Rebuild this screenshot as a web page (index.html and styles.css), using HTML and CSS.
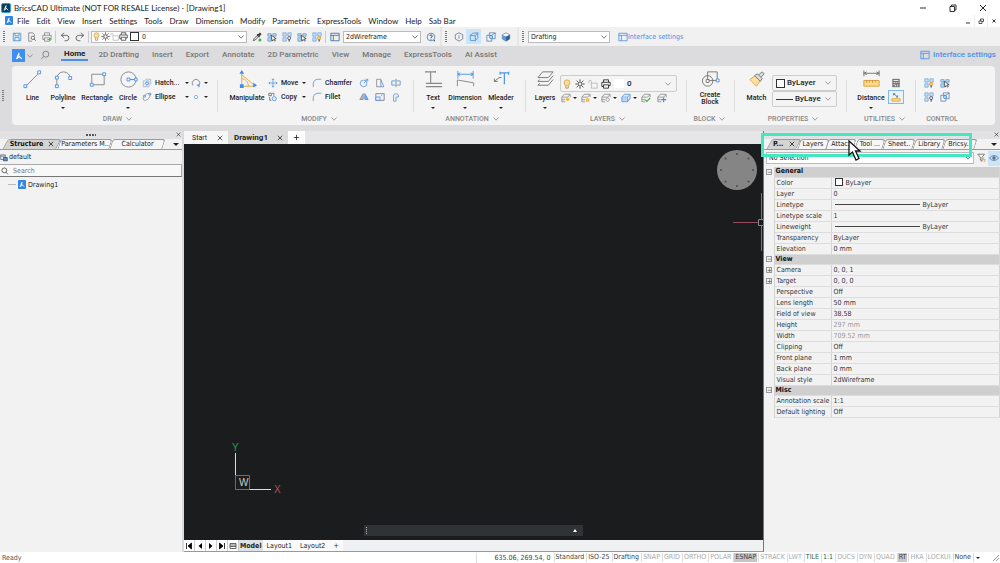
FILE: index.html
```
<!DOCTYPE html>
<html lang="en">
<head>
<meta charset="utf-8">
<title>BricsCAD Ultimate</title>
<link rel="stylesheet" href="styles.css">
</head>
<body>
<svg class="defs" aria-hidden="true">
  <symbol id="logo" viewBox="0 0 12 12"><path d="M6 2.500 3 9.500M5 5l4.200 4.300M6 2.500l-.8 4.300M3.600 9l3-2" fill="none" stroke="#fff" stroke-width="1.300"/></symbol>
  <symbol id="chev" viewBox="0 0 8 8"><path d="M1.500 2.500 4 5.200l2.500-2.700" fill="none" stroke="currentColor" stroke-width=".8"/></symbol>
  <symbol id="x" viewBox="0 0 8 8"><path d="m1 1 6 6M7 1 1 7" fill="none" stroke="currentColor"/></symbol>
  <symbol id="mag" viewBox="0 0 12 12"><circle cx="7" cy="5" r="3.600" fill="none" stroke="currentColor"/><path d="M4.500 7.700 1.500 11" stroke="currentColor"/></symbol>
  <symbol id="save" viewBox="0 0 12 12"><path d="M1.500 1.500h9v9h-9zM3.500 1.500v3h5v-3M3.500 10.500v-4h5v4" fill="#e8f3fd" stroke="#4a90d0"/></symbol>
  <symbol id="preview" viewBox="0 0 12 12"><path d="M9 5V3L7 1H2v10h4" fill="none" stroke="#666" stroke-width=".8"/><circle cx="7" cy="7" r="2" fill="#fff" stroke="#555"/><path d="m8.500 8.500 2 2" stroke="#555"/></symbol>
  <symbol id="print" viewBox="0 0 12 12"><path d="M3 4V1h6v3M3 9H1V4h10v4H9M3 7h6v4H3z" fill="none" stroke="currentColor"/></symbol>
  <symbol id="undo" viewBox="0 0 12 12"><path d="M5 1 1.500 4 5 7M1.500 4h6a3 3 0 0 1 0 6.500H5.500" fill="none" stroke="#555"/></symbol>
  <symbol id="bulb" viewBox="0 0 12 12"><circle cx="6" cy="4.500" r="3.500" fill="#fbdc9b" stroke="#dda33f"/><path d="M4.500 8v3h3V8" fill="#eee" stroke="#b58b4b"/></symbol>
  <symbol id="sun" viewBox="0 0 12 12"><circle cx="6" cy="6" r="2.400" fill="none" stroke="#222"/><path d="M6 .5v2M6 9.500v2M.5 6h2M9.500 6h2M2 2l1.500 1.500M8.500 8.500 10 10M10 2 8.500 3.500M3.500 8.500 2 10" stroke="#222"/></symbol>
  <symbol id="lock" viewBox="0 0 12 12"><path d="M4 5h7v6H4zM4 5V3a1.500 1.500 0 0 0-3 0v2" fill="none" stroke="#b5b5b5"/></symbol>
  <symbol id="pick" viewBox="0 0 12 12"><path d="m1.500 10.500 1-2.500 4-4 1.500 1.500-4 4z" fill="#ddd" stroke="#555"/><path d="m6 3 3 3M7 4l2.500-2.500 1 1L8.500 5" stroke="#333" stroke-width="1.400" fill="none"/><circle cx="9.500" cy="9.500" r="1.800" fill="#36b24a"/></symbol>
  <symbol id="selbox" viewBox="0 0 12 12"><path d="M1 2h4v3H1zM7 2h4v3H7zM1 7h4v4H1z" fill="#b9daf5" stroke="#5b8fbd" stroke-width=".8"/><path d="m5 4 1 7 1.500-2L9 11l1-.6-1.300-2.200L11 8z" fill="#fff" stroke="#222" stroke-width=".8"/></symbol>
  <symbol id="grid4" viewBox="0 0 12 12"><path d="M1 1h4v4H1zM7 1h4v4H7zM1 7h4v4H1z" fill="#c9e1f6" stroke="#6b9ac5" stroke-width=".8"/><circle cx="8.600" cy="7.300" r="1.800" fill="#fff" stroke="#445"/><path d="M8.600 9v2.500" stroke="#445" stroke-width="1.400"/></symbol>
  <symbol id="grid4y" viewBox="0 0 12 12"><path d="M1 1h4v4H1zM7 1h4v4H7zM1 7h4v4H1z" fill="#c9e1f6" stroke="#5a9be0" stroke-width=".8"/><circle cx="8.600" cy="7.300" r="2" fill="#ffcf63" stroke="#e0a030"/><path d="M8.600 9v2.500" stroke="#445" stroke-width="1.400"/></symbol>
  <symbol id="win" viewBox="0 0 12 12"><path d="M1 1.500h10v9H1zM1 4h10M4 4v6.500" fill="none" stroke="currentColor"/></symbol>
  <symbol id="help" viewBox="0 0 12 12"><circle cx="6" cy="6" r="4.600" fill="none" stroke="#4d7fae"/><path d="M4.500 4.700a1.500 1.500 0 1 1 1.500 1.800v1M6 8.400v.8" fill="none" stroke="#334"/><path d="m10 9 1 2h-2" fill="#333"/></symbol>
  <symbol id="cube" viewBox="0 0 12 12"><path d="m6 1 4.500 2.300v5L6 11 1.500 8.300v-5zM6 4v4" fill="none" stroke="#5a6f84" stroke-width=".9"/></symbol>
  <symbol id="cubeo" viewBox="0 0 12 12"><path d="m4.500 1.500 6-.5v6l-3 3.500-6-.5V4zM1.500 4l6 .5L10.500 1M7.500 4.500v6" fill="none" stroke="#3f86c8" stroke-width=".9"/></symbol>
  <symbol id="cubeb" viewBox="0 0 12 12"><path d="m6 1 4.500 2.300v5L6 11 1.500 8.300v-5z" fill="#fff" stroke="#6a8fb4"/><path d="m1.500 3.300 4.500 2v5.700L1.500 8.300z" fill="#5b97d6"/><path d="m6 5.300 4.500-2v5L6 11z" fill="#35608c"/></symbol>
  <symbol id="cubes" viewBox="0 0 12 12"><path d="M1 4h6v7H1zM4 1h7v7H7M4 1v3M7 4l4-3" fill="none" stroke="#3b6fa0" stroke-width=".8"/><circle cx="6" cy="6" r="1.800" fill="#d7ebfc" stroke="#3284d6"/></symbol>
  <symbol id="line" viewBox="0 0 22 22"><path d="M4 18 18 4" stroke="#888"/><path d="M2 16.500h3v3H2zM16.500 2h3v3h-3z" fill="#fff" stroke="#4d92e8"/></symbol>
  <symbol id="poly" viewBox="0 0 22 22"><path d="M4 17V10a7 7 0 0 1 14 0" fill="none" stroke="#888"/><path d="M2.500 16.500h3v3h-3zM2.500 7.500h3v3h-3zM16.500 8h3v3h-3z" fill="#fff" stroke="#4d92e8"/></symbol>
  <symbol id="rect" viewBox="0 0 22 22"><path d="M5 5.500h13v11H5z" fill="none" stroke="#888"/><path d="M3.500 15h3v3h-3zM16.500 4h3v3h-3z" fill="#fff" stroke="#4d92e8"/></symbol>
  <symbol id="circ" viewBox="0 0 22 22"><circle cx="11" cy="11" r="8" fill="none" stroke="#888"/><path d="M11 11h7" stroke="#4d92e8"/><path d="M9.500 9.500h3v3h-3zM17.500 9.500h2.500v3h-2.500z" fill="#fff" stroke="#4d92e8"/></symbol>
  <symbol id="manip" viewBox="0 0 22 22"><path d="M5 4v14h14M5 6l12 10M5 10a8 8 0 0 1 7 8" fill="none" stroke="#e3a63c"/><path d="m5 1 2.500 4h-5zM21 17l-4 2.500v-5zM3 16h4v4H3z" fill="#3e8cf0"/></symbol>
  <symbol id="text" viewBox="0 0 22 22"><path d="M3 3h10M8 3v12M3 2v2M13 2v2M3 15h17M3 18.500h17" fill="none" stroke="#888" stroke-width="1.200"/></symbol>
  <symbol id="dim" viewBox="0 0 22 22"><path d="M3 2v8M19 2v8M3 5.500h16M5.500 4 3 5.500 5.500 7M16.500 4 19 5.500 16.500 7" fill="none" stroke="#5197e8"/><path d="M2.500 18v-6.500L19.500 14.500V18" fill="none" stroke="#888"/></symbol>
  <symbol id="mlead" viewBox="0 0 22 22"><path d="M9.500 4h9M14 4v12M9.500 3v3M18.500 3v3" fill="none" stroke="#5197e8" stroke-width="1.300"/><path d="M11 9H8.500L3.500 13M3.500 10v3h3.500" fill="none" stroke="#777"/></symbol>
  <symbol id="layers" viewBox="0 0 22 22"><path d="M8 3h11l-5 6H3zM3 13h11l5-6M3 17h11l5-6M3 13l2-2M3 17l2-2" fill="none" stroke="#777"/></symbol>
  <symbol id="block" viewBox="0 0 22 22"><circle cx="8" cy="12.500" r="5.500" fill="none" stroke="#777"/><path d="M8 12V3h10v9z" fill="none" stroke="#777"/><path d="M6.500 11h3v3h-3z" fill="#fff" stroke="#777"/><path d="M17 10.500h3v3h-3z" fill="#fff" stroke="#4d92e8"/></symbol>
  <symbol id="brush" viewBox="0 0 22 22"><path d="m4 11 6-4 5 5-4 6z" fill="#ffe0a0" stroke="#dfa64a"/><path d="m9 7 3-2 5 5-2 3zM13.500 6l3.500-3 2 2-3 3.500" fill="#ddd" stroke="#777"/></symbol>
  <symbol id="dist" viewBox="0 0 22 22"><path d="M3 1.500v6M19 1.500v6M3 4.500h16M6 3 3 4.500 6 6M16 3l3 1.500L16 6" fill="none" stroke="#777"/><path d="M3 12h16v6H3z" fill="#ffd98b" stroke="#dca23d"/><path d="M6 12v2.500M9 12v2M12 12v2.500M15 12v2" stroke="#a87a2a" stroke-width=".7"/></symbol>
  <symbol id="hatch" viewBox="0 0 12 12"><path d="M1.500 3.500h7v7h-7zM4 1.500h6.500V8M2 8l4-4M4 10l4-4" fill="none" stroke="#8ea9c6" stroke-width=".8"/><circle cx="6" cy="6.500" r="1.700" fill="none" stroke="#4d92e8"/></symbol>
  <symbol id="ell" viewBox="0 0 12 12"><ellipse cx="5.500" cy="6" rx="5" ry="3" transform="rotate(-45 5.500 6)" fill="none" stroke="#999"/><path d="M8.500 1.500h2v2h-2zM2 4h2v2H2z" fill="#fff" stroke="#4d92e8"/></symbol>
  <symbol id="arc" viewBox="0 0 12 12"><path d="M2.500 9a4.500 4.500 0 1 1 7 0" fill="none" stroke="#778"/><path d="M7 8.500h2.500V11" fill="none" stroke="#4d92e8" stroke-width="1.300"/></symbol>
  <symbol id="pt" viewBox="0 0 12 12"><circle cx="6" cy="6" r="2" fill="#fff" stroke="#72a8ea"/></symbol>
  <symbol id="move" viewBox="0 0 12 12"><path d="M6 1v10M1 6h10M4.500 2.500 6 1l1.500 1.500M4.500 9.500 6 11l1.500-1.500M2.500 4.500 1 6l1.500 1.500M9.500 4.500 11 6 9.500 7.500" fill="none" stroke="#4b8fdc" stroke-width=".9"/></symbol>
  <symbol id="copy" viewBox="0 0 12 12"><path d="M1 1.500h3v3H1zM5 1.500h2v3M2 6v4h2" fill="none" stroke="#667"/><circle cx="7.500" cy="8" r="2.500" fill="#e5f1ff" stroke="#4d92e8"/></symbol>
  <symbol id="fil" viewBox="0 0 12 12"><path d="M1.500 11V7A5.500 5.500 0 0 1 7 1.500h4" fill="none" stroke="#5c96d8"/></symbol>
  <symbol id="rot" viewBox="0 0 12 12"><circle cx="5.500" cy="6.500" r="4" fill="none" stroke="#5f98da"/><path d="m5.500 6.500 5-5M8 1.500h2.500V4" fill="none" stroke="#5f98da"/></symbol>
  <symbol id="str" viewBox="0 0 12 12"><path d="M2 1.500h5v9H2z" fill="none" stroke="#888"/><path d="M7 2 10.500 10.500H7" fill="none" stroke="#4d92e8"/></symbol>
  <symbol id="spl" viewBox="0 0 12 12"><path d="M5 3.500H1v5h4M7 3.500h4v5H7" fill="none" stroke="#4d92e8"/><path d="M6 1v10" stroke="#777"/></symbol>
  <symbol id="mir" viewBox="0 0 12 12"><path d="M5 2v7H1z" fill="#bbb" stroke="#888"/><path d="M7 2v7h4z" fill="#6facf3" stroke="#4d92e8"/></symbol>
  <symbol id="scale" viewBox="0 0 12 12"><path d="M1 2h10v8H1z" fill="none" stroke="#778"/><path d="M1 6h5v4H1zM7 5l2-1.500" fill="#e6f2ff" stroke="#4d92e8"/></symbol>
  <symbol id="off" viewBox="0 0 12 12"><path d="M3 11V5a3 3 0 0 1 6 0v1H6v5z" fill="none" stroke="#5f98da"/></symbol>
  <symbol id="lay" viewBox="0 0 12 12"><path d="M4 1.500h7L8 5H1zM1 8h4M1 10.500h4M1 5v5.500M11 2v3" fill="none" stroke="#777" stroke-width=".8"/></symbol>
  <symbol id="layb" viewBox="0 0 12 12"><path d="M4 1.500h7L8 5H1z" fill="#d5e8fc" stroke="#4d85c0" stroke-width=".8"/><path d="M1 5v5.500h7V5M11 2v5l-3 3.500" fill="#b5d5f7" stroke="#4d85c0" stroke-width=".8"/></symbol>
  <symbol id="calc" viewBox="0 0 12 12"><path d="M1.500 1h9v10h-9z" fill="#777"/><path d="M3 3h6M3 5.500h1.500M5.500 5.500H7M8 5.500h1M3 8h1.500M5.500 8v2M8 8v2" stroke="#fff"/></symbol>
  <symbol id="meas" viewBox="0 0 12 12"><path d="M1 8h10v3H1z" fill="#ffd98b" stroke="#dca23d"/><path d="m3 2 5 4M3 4V2h2M8 4v2H6" fill="none" stroke="#667"/></symbol>
  <symbol id="funnel" viewBox="0 0 12 12"><path d="M1 1.500h8L6 5v5L4 8.500V5z" fill="#fff" stroke="#666"/><path d="m8.500 5-1.500 3h3l-1.500 3" fill="none" stroke="#e3a63c"/></symbol>
  <symbol id="eye" viewBox="0 0 12 12"><path d="M.5 6Q6 0 11.500 6 6 12 .5 6z" fill="#c9dcee" stroke="#5a7b99"/><circle cx="6" cy="6" r="2" fill="#4d6f90"/></symbol>
</svg>

<header class="titlebar">
  <span class="applogo"><svg><use href="#logo"/></svg></span>
  <h1>BricsCAD Ultimate (NOT FOR RESALE License) - [Drawing1]</h1>
  <div class="winbtns">
    <button aria-label="Minimize"><svg viewBox="0 0 8 8"><path d="M1 4h6" stroke="#333"/></svg></button>
    <button aria-label="Restore"><svg viewBox="0 0 8 8"><path d="M1 2.500h4.500V7.500H1zM2.500 2.500V1H7v5H5.500" fill="none" stroke="#333"/></svg></button>
    <button aria-label="Close"><svg><use href="#x"/></svg></button>
  </div>
</header>

<nav class="menubar" aria-label="Main menu">
  <span class="doclogo"><svg><use href="#logo"/></svg></span>
  <button>File</button><button>Edit</button><button>View</button><button>Insert</button><button>Settings</button><button>Tools</button><button>Draw</button><button>Dimension</button><button>Modify</button><button>Parametric</button><button>ExpressTools</button><button>Window</button><button>Help</button><button>Sab Bar</button>
  <div class="docbtns">
    <button aria-label="Minimize drawing"><svg viewBox="0 0 8 8"><path d="M2 6h4" stroke="#333"/></svg></button>
    <button aria-label="Restore drawing"><svg viewBox="0 0 8 8"><path d="M2 4h3v2.500H2zM3.500 4V2H6.500v2.500H5" fill="none" stroke="#333" stroke-width=".8"/></svg></button>
    <button aria-label="Close drawing"><svg viewBox="0 0 8 8"><path d="m2.500 2.500 3 3M5.500 2.500l-3 3" stroke="#333"/></svg></button>
  </div>
</nav>

<div class="toolbar">
  <div class="bar">
    <i class="grip"></i>
    <button class="ic" aria-label="Save"><svg><use href="#save"/></svg></button>
    <button class="ic" aria-label="Preview"><svg><use href="#preview"/></svg></button>
    <button class="ic dim" aria-label="Print"><svg viewBox="0 0 12 12"><use href="#print" width="12" height="12"/><path d="M6.500 9h4M9 7l2 2-2 2" fill="none" stroke="#45b052"/></svg></button>
    <i class="vsep"></i>
    <button class="ic" aria-label="Undo"><svg><use href="#undo"/></svg></button>
    <button class="ic flip" aria-label="Redo"><svg><use href="#undo"/></svg></button>
    <i class="vsep"></i>
    <div class="field layerfield">
      <svg><use href="#bulb"/></svg><svg><use href="#sun"/></svg><svg><use href="#lock"/></svg><svg><use href="#print"/></svg><i class="swatch"></i>
      <select aria-label="Current layer"><option>0</option></select><svg class="cv"><use href="#chev"/></svg>
    </div>
    <button class="ic" aria-label="Pick layer"><svg><use href="#pick"/></svg></button>
    <button class="ic" aria-label="Select"><svg><use href="#selbox"/></svg></button>
    <button class="ic" aria-label="Isolate"><svg><use href="#grid4"/></svg></button>
    <button class="ic" aria-label="Hide"><svg><use href="#selbox"/></svg></button>
    <button class="ic" aria-label="Show"><svg><use href="#grid4y"/></svg></button>
    <i class="vsep"></i>
    <button class="ic blue" aria-label="Visual styles"><svg><use href="#win"/></svg></button>
    <div class="field stylefield"><select aria-label="Visual style"><option>2dWireframe</option></select><svg class="cv"><use href="#chev"/></svg></div>
    <button class="ic helpbtn" aria-label="Help"><svg><use href="#help"/></svg></button>
  </div>
  <div class="bar views">
    <i class="grip"></i>
    <button class="ic" aria-label="Wireframe"><svg><use href="#cube"/></svg></button>
    <button class="ic on" aria-label="Solid"><svg><use href="#cubeo"/></svg></button>
    <button class="ic gapl" aria-label="Faces"><svg><use href="#cubes"/></svg></button>
    <button class="ic" aria-label="Shaded"><svg><use href="#cubeb"/></svg></button>
  </div>
  <div class="bar last">
    <i class="grip"></i>
    <div class="field wsfield"><select aria-label="Workspace"><option>Drafting</option></select><svg class="cv"><use href="#chev"/></svg></div>
    <a class="isl" href="#"><svg><use href="#win"/></svg>Interface settings</a>
  </div>
</div>

<section class="ribbon">
  <div class="rtabs">
    <button class="rlogo" aria-label="Application menu"><svg><use href="#logo"/></svg></button>
    <svg class="cv"><use href="#chev"/></svg>
    <button class="rsearch" aria-label="Search"><svg><use href="#mag"/></svg></button>
    <button class="rtab cur">Home</button><button class="rtab">2D Drafting</button><button class="rtab">Insert</button><button class="rtab">Export</button><button class="rtab">Annotate</button><button class="rtab">2D Parametric</button><button class="rtab">View</button><button class="rtab">Manage</button><button class="rtab">ExpressTools</button><button class="rtab">AI Assist</button>
    <a class="risl" href="#"><svg><use href="#win"/></svg>Interface settings</a>
  </div>
  <div class="rbody">
    <i class="grip rgrip"></i>
    <div class="panel">
      <div class="group g-draw">
        <div class="tools">
          <button class="big"><svg><use href="#line"/></svg>Line</button>
          <button class="big arrow"><svg><use href="#poly"/></svg>Polyline</button>
          <button class="big"><svg><use href="#rect"/></svg>Rectangle</button>
          <button class="big arrow"><svg><use href="#circ"/></svg>Circle</button>
          <div class="small">
            <button class="sm"><svg><use href="#hatch"/></svg><span>Hatch...</span><b></b></button><button class="sm" aria-label="Arc"><svg><use href="#arc"/></svg><b></b></button>
            <button class="sm"><svg><use href="#ell"/></svg><span>Ellipse</span><b></b></button><button class="sm" aria-label="Point"><svg><use href="#pt"/></svg><b></b></button>
          </div>
        </div>
        <h2>DRAW<svg><use href="#chev"/></svg></h2>
      </div>
      <div class="group g-modify">
        <div class="tools">
          <button class="big"><svg><use href="#manip"/></svg>Manipulate</button>
          <div class="small">
            <button class="sm"><svg><use href="#move"/></svg><span>Move</span><b></b></button><button class="sm"><svg><use href="#fil"/></svg><span>Chamfer</span></button>
            <button class="sm" aria-label="Rotate"><svg><use href="#rot"/></svg></button><button class="sm" aria-label="Stretch"><svg><use href="#str"/></svg></button><button class="sm" aria-label="Split"><svg><use href="#spl"/></svg></button>
            <button class="sm"><svg><use href="#copy"/></svg><span>Copy</span><b></b></button><button class="sm"><svg><use href="#fil"/></svg><span>Fillet</span></button>
            <button class="sm" aria-label="Mirror"><svg><use href="#mir"/></svg></button><button class="sm" aria-label="Scale"><svg><use href="#scale"/></svg></button><button class="sm" aria-label="Offset"><svg><use href="#off"/></svg></button>
          </div>
        </div>
        <h2>MODIFY<svg><use href="#chev"/></svg></h2>
      </div>
      <div class="group g-anno">
        <div class="tools">
          <button class="big arrow"><svg><use href="#text"/></svg>Text</button>
          <button class="big arrow"><svg><use href="#dim"/></svg>Dimension</button>
          <button class="big arrow"><svg><use href="#mlead"/></svg>Mleader</button>
        </div>
        <h2>ANNOTATION<svg><use href="#chev"/></svg></h2>
      </div>
      <div class="group g-layers">
        <div class="tools">
          <button class="big arrow"><svg><use href="#layers"/></svg>Layers</button>
          <div class="lstack">
            <div class="rfield"><svg><use href="#bulb"/></svg><svg><use href="#sun"/></svg><svg><use href="#lock"/></svg><svg><use href="#print"/></svg><i class="white"></i><select aria-label="Layer"><option>0</option></select><svg class="cv"><use href="#chev"/></svg></div>
            <div class="lrow">
              <button class="sm" aria-label="Layer off"><svg viewBox="0 0 12 12"><use href="#lay" width="12" height="12"/><circle cx="8" cy="7.500" r="2.200" fill="#f4b84a"/></svg><b></b></button>
              <button class="sm" aria-label="Layer lock"><svg viewBox="0 0 12 12"><use href="#lay" width="12" height="12"/><path d="M6 6.500h4v4H6z" fill="#f4b84a"/></svg><b></b></button>
              <button class="sm" aria-label="Layer freeze"><svg viewBox="0 0 12 12"><use href="#lay" width="12" height="12"/><circle cx="8" cy="8" r="2" fill="none" stroke="#999"/></svg><b></b></button>
              <button class="sm" aria-label="Layer state"><svg><use href="#layb"/></svg><b></b></button>
              <button class="sm" aria-label="Layer current"><svg viewBox="0 0 12 12"><use href="#lay" width="12" height="12"/><path d="m5 8 2 2 4-4" fill="none" stroke="#4fae43" stroke-width="1.500"/></svg></button>
              <button class="sm" aria-label="Layer isolate"><svg viewBox="0 0 12 12"><use href="#lay" width="12" height="12"/><path d="M8 5v6M5 8h6" stroke="#3e8cf0" stroke-width="1.400"/></svg></button>
            </div>
          </div>
        </div>
        <h2>LAYERS<svg><use href="#chev"/></svg></h2>
      </div>
      <div class="group g-block">
        <div class="tools"><button class="big two"><svg><use href="#block"/></svg>Create<br>Block</button></div>
        <h2>BLOCK<svg><use href="#chev"/></svg></h2>
      </div>
      <div class="group g-props">
        <div class="tools">
          <button class="big"><svg><use href="#brush"/></svg>Match</button>
          <div class="pstack">
            <div class="rfield"><i class="swatch"></i><select aria-label="Color"><option>ByLayer</option></select><svg class="cv"><use href="#chev"/></svg></div>
            <div class="rfield"><i class="stroke"></i><select aria-label="Linetype"><option>ByLaye</option></select><svg class="cv"><use href="#chev"/></svg></div>
          </div>
        </div>
        <h2>PROPERTIES<svg><use href="#chev"/></svg></h2>
      </div>
      <div class="group g-util">
        <div class="tools">
          <button class="big arrow"><svg><use href="#dist"/></svg>Distance</button>
          <div class="small">
            <button class="sm" aria-label="Calculator"><svg><use href="#calc"/></svg></button>
            <button class="sm sel" aria-label="Measure"><svg><use href="#meas"/></svg></button>
          </div>
        </div>
        <h2>UTILITIES<svg><use href="#chev"/></svg></h2>
      </div>
      <div class="group g-ctrl">
        <div class="tools"><div class="small">
          <button class="sm" aria-label="Show objects"><svg><use href="#grid4y"/></svg></button><button class="sm" aria-label="Select objects"><svg><use href="#selbox"/></svg></button>
          <button class="sm" aria-label="Hide objects"><svg><use href="#grid4"/></svg></button><button class="sm" aria-label="Isolate objects"><svg><use href="#cubes"/></svg></button>
        </div></div>
        <h2>CONTROL</h2>
      </div>
    </div>
  </div>
</section>

<main class="work">
  <aside class="dock left">
    <div class="handle"><i></i><button aria-label="Close panel"><svg><use href="#x"/></svg></button></div>
    <div class="dtabs">
      <button class="dtab cur">Structure<svg><use href="#x"/></svg></button><button class="dtab t-param">Parameters M..</button><button class="dtab t-calc">Calculator</button>
      <button class="more" aria-label="More tabs"></button>
    </div>
    <div class="conf"><svg viewBox="0 0 12 12"><path d="M1 2h7v7H1zM1 4h7" fill="#e8f1fa" stroke="#556"/><path d="M5 6h6v5H5z" fill="#4f90c8" stroke="#345"/></svg>default</div>
    <label class="search"><svg><use href="#mag"/></svg><input type="text" placeholder="Search" aria-label="Search structure"></label>
    <div class="tree"><i></i><span class="doclogo"><svg><use href="#logo"/></svg></span>Drawing1</div>
  </aside>

  <section class="center">
    <div class="files">
      <button class="file">Start<svg><use href="#x"/></svg></button><button class="file cur">Drawing1<svg><use href="#x"/></svg></button><button class="file plus" aria-label="New drawing"><svg viewBox="0 0 8 8"><path d="M4 1v6M1 4h6" stroke="#333"/></svg></button>
    </div>
    <div class="canvas">
      <svg class="look" viewBox="0 0 40 40"><circle cx="20" cy="20" r="20" fill="#858585"/><g fill="#4c4c4c"><circle cx="20" cy="4" r="1"/><circle cx="31.500" cy="8.500" r="1"/><circle cx="36" cy="20" r="1"/><circle cx="31.500" cy="31.500" r="1"/><circle cx="20" cy="36" r="1"/><circle cx="8.500" cy="31.500" r="1"/><circle cx="4" cy="20" r="1"/><circle cx="8.500" cy="8.500" r="1"/></g></svg>
      <svg class="cross" viewBox="0 0 30 58"><path d="M0 29.500h25" stroke="#98495b"/><path d="M28.500 0v26M28.500 33v25" stroke="#777"/><path d="M25.500 26.500h5v6h-5z" fill="none" stroke="#888"/></svg>
      <svg class="ucs" viewBox="0 0 60 56"><path d="M5.500 10v32.500M19 46.500h22" stroke="#ddd" fill="none"/><path d="M5.500 32.500H19.500V46.500H5.500" fill="none" stroke="#a05560"/><path d="M5.500 32v15" stroke="#169b3f"/><text x="2" y="8" fill="#22a04b">Y</text><text x="9" y="43" fill="#ccc">W</text><text x="44" y="50" fill="#b0525f">X</text></svg>
      <div class="cmd"><i></i><button aria-label="Expand command line"></button></div>
    </div>
    <div class="layouts">
      <button class="nav" aria-label="First"><svg viewBox="0 0 8 8"><path d="M1.500 1v6M6.500 1v6L3 4z" fill="#000" stroke="#000" stroke-width=".8"/></svg></button>
      <button class="nav" aria-label="Previous"><svg viewBox="0 0 8 8"><path d="M6 1v6L2.500 4z"/></svg></button>
      <button class="nav" aria-label="Next"><svg viewBox="0 0 8 8"><path d="M2 1v6l3.500-3z"/></svg></button>
      <button class="nav" aria-label="Last"><svg viewBox="0 0 8 8"><path d="M6.500 1v6M1.500 1v6L5 4z" fill="#000" stroke="#000" stroke-width=".8"/></svg></button>
      <button class="nav" aria-label="List"><svg viewBox="0 0 8 8"><path d="M1 1.500h6v5H1zM1 3h6M1 4.500h6" fill="none" stroke="#444" stroke-width=".8"/></svg></button>
      <button class="lt cur">Model</button><button class="lt">Layout1</button><button class="lt">Layout2</button><button class="lt add">+</button>
    </div>
  </section>

  <aside class="dock right">
    <div class="handle"><i></i><button aria-label="Close panel"><svg><use href="#x"/></svg></button></div>
    <div class="dtabs">
      <button class="dtab cur">P...<svg><use href="#x"/></svg></button><button class="dtab">Layers</button><button class="dtab">Attac..</button><button class="dtab">Tool ...</button><button class="dtab">Sheet..</button><button class="dtab">Library</button><button class="dtab">Bricsy...</button>
      <button class="more" aria-label="More tabs"></button>
    </div>
    <div class="selrow">
      <div class="field"><select aria-label="Selection"><option>No Selection</option></select><svg class="cv"><use href="#chev"/></svg></div>
      <button class="ic" aria-label="Filter"><svg><use href="#funnel"/></svg></button><button class="ic on" aria-label="Show highlights"><svg><use href="#eye"/></svg></button>
    </div>
    <table class="props">
      <colgroup><col class="c1"><col class="c2"><col></colgroup>
      <tr class="head"><td><i>−</i></td><th colspan="2">General</th></tr>
      <tr><td></td><th>Color</th><td><i class="swatch"></i>ByLayer</td></tr>
      <tr><td></td><th>Layer</th><td>0</td></tr>
      <tr><td></td><th>Linetype</th><td><i class="rule"></i>ByLayer</td></tr>
      <tr><td></td><th>Linetype scale</th><td>1</td></tr>
      <tr><td></td><th>Lineweight</th><td><i class="rule"></i>ByLayer</td></tr>
      <tr><td></td><th>Transparency</th><td>ByLayer</td></tr>
      <tr><td></td><th>Elevation</th><td>0 mm</td></tr>
      <tr class="head"><td><i>−</i></td><th colspan="2">View</th></tr>
      <tr><td><i>+</i></td><th>Camera</th><td>0, 0, 1</td></tr>
      <tr><td><i>+</i></td><th>Target</th><td>0, 0, 0</td></tr>
      <tr><td></td><th>Perspective</th><td>Off</td></tr>
      <tr><td></td><th>Lens length</th><td>50 mm</td></tr>
      <tr><td></td><th>Field of view</th><td>38.58</td></tr>
      <tr><td></td><th>Height</th><td class="ro">297 mm</td></tr>
      <tr><td></td><th>Width</th><td class="ro">709.52 mm</td></tr>
      <tr><td></td><th>Clipping</th><td>Off</td></tr>
      <tr><td></td><th>Front plane</th><td>1 mm</td></tr>
      <tr><td></td><th>Back plane</th><td>0 mm</td></tr>
      <tr><td></td><th>Visual style</th><td>2dWireframe</td></tr>
      <tr class="head"><td><i>−</i></td><th colspan="2">Misc</th></tr>
      <tr><td></td><th>Annotation scale</th><td>1:1</td></tr>
      <tr><td></td><th>Default lighting</th><td>Off</td></tr>
    </table>
    <div class="callout"></div>
    <svg class="cursor" viewBox="0 0 16 23"><path d="M2 1v14l3.500-3 3.500 8 3-1.500-3.500-7.500H13z" fill="#fff" stroke="#111" stroke-width="1.300"/></svg>
  </aside>
</main>

<footer class="status">
  <span class="ready">Ready</span>
  <span class="coords">635.06, 269.54, 0</span>
  <button>Standard</button><button>ISO-25</button><button>Drafting</button><button class="off">SNAP</button><button class="off">GRID</button><button class="off">ORTHO</button><button class="off">POLAR</button><button class="act">ESNAP</button><button class="off">STRACK</button><button class="off">LWT</button><button class="green">TILE</button><button class="green">1:1</button><button class="off">DUCS</button><button class="off">DYN</button><button class="off">QUAD</button><button class="act">RT</button><button class="off">HKA</button><button class="off">LOCKUI</button><button>None</button><button class="dd" aria-label="Status menu"></button>
  <svg class="size" viewBox="0 0 8 8"><path d="M1 7 7 1M4 7l3-3" stroke="#999"/></svg>
</footer>
</body>
</html>
```
FILE: styles.css
```
* { box-sizing: border-box; }
html, body { height: 100%; }
body {
  margin: 0;
  display: flex;
  flex-direction: column;
  overflow: hidden;
  background: #fff;
  color: #222;
  font: 7px/10px "DejaVu Sans Condensed", "DejaVu Sans", sans-serif;
  white-space: nowrap;
}
.defs { display: none; }
svg { display: block; flex: none; width: 10px; height: 10px; }
button, select, input { font: inherit; color: inherit; margin: 0; padding: 0; border: 0; background: none; border-radius: 0; }
select { appearance: none; flex: 1; min-width: 0; outline: 0; }
button { flex: none; white-space: nowrap; }
a { text-decoration: none; }
.cv { width: 8px; height: 8px; color: #555; }
.swatch { flex: none; width: 9px; height: 9px; border: 1px solid #333; background: #fff; }

/* Title and menu */
.titlebar, .menubar { display: flex; align-items: center; height: 14px; font-family: Lato, sans-serif; font-size: 8px; }
.titlebar { padding: 1px 12px 0 1px; gap: 3px; }
.titlebar h1 { margin: 0; font-size: 8px; font-weight: 400; }
.applogo { background: #0b3d5c; border: 1px solid #2a9fd8; border-radius: 2px; }
.applogo svg { width: 8px; height: 8px; }
.doclogo { background: #2f86e8; border-radius: 1px; }
.doclogo svg { width: 8px; height: 9px; }
.winbtns { display: flex; margin-left: auto; gap: 20px; }
.winbtns button { padding: 1px; }
.winbtns svg { width: 8px; height: 8px; }
.menubar { gap: 7px; padding-left: 5px; height: 13px; }
.menubar .doclogo { margin-right: -3px; }
.docbtns { display: flex; margin-left: auto; gap: 1px; background: #eee; }
.docbtns button { width: 12px; height: 12px; background: #fff; display: grid; place-items: center; }
.docbtns svg { width: 8px; height: 8px; }

/* Quick toolbars */
.toolbar { display: flex; height: 19px; background: #e6e6e6; gap: 2px; }
.bar { display: flex; align-items: center; background: #f1f1f2; padding-left: 3px; }
.bar.views { padding-right: 4px; }
.bar.last { flex: 1; }
.grip { flex: none; width: 2px; height: 11px; margin-right: 4px; background: repeating-linear-gradient(#777 0 1px, transparent 1px 2px); }
.ic { width: 15px; height: 15px; display: grid; place-items: center; }
.ic.on { background: #cbe4f8; }
.dim { color: #888; }
.flip svg { transform: scaleX(-1); }
.vsep { width: 1px; height: 12px; margin: 0 1px; background: #ccc; }
.field { display: flex; align-items: center; height: 12px; background: #fff; border: 1px solid #bbb; padding: 0 1px 0 2px; }
.layerfield { width: 156px; margin: 0 2px 0 1px; padding-left: 0; color: #333; }
.layerfield svg { width: 9px; height: 9px; }
.layerfield .cv { width: 8px; height: 8px; }
.layerfield .swatch { margin: 0 3px 0 2px; }
.stylefield { width: 78px; margin-left: 1px; }
.helpbtn { margin: 0 2px; }
.blue { color: #3c6c9c; }
.gapl { margin-left: 2px; }
.wsfield { width: 82px; }
.isl { display: flex; align-items: center; margin-left: 8px; color: #4a90e2; }

/* Ribbon */
.ribbon { background: #dcdcde; font-family: Roboto, sans-serif; font-weight: 500; padding-bottom: 6px; }
.rtabs { display: flex; align-items: flex-start; height: 20px; padding: 3px 4px 0 12px; font-size: 8px; color: #777; }
.rlogo { background: #3f8ff0; width: 13px; height: 13px; display: grid; place-items: center; }
.rtabs .cv { margin: 3px 0 0 1px; color: #888; }
.rsearch { margin: 0 11px 0 6px; padding-top: 1px; color: #777; }
.rtab { height: 12px; line-height: 10px; padding: 0 1px; margin-right: 11px; }
.rtab.cur { color: #222; font-weight: 700; padding: 0 3px; margin-right: 9px; border-bottom: 2px solid #4a8fe8; }
.risl { display: flex; align-items: center; gap: 3px; margin-left: auto; font-size: 8px; line-height: 12px; color: #4a90f0; }
.rbody { display: flex; align-items: center; padding-right: 5px; }
.rgrip { margin: 0 8px 0 2px; }
.panel { flex: 1; display: flex; height: 59px; background: #f4f4f5; border-radius: 4px; }
.group { position: relative; display: flex; flex-direction: column; }
.group + .group::before { content: ""; position: absolute; left: 0; top: 14px; height: 32px; width: 1px; background: #ddd; }
.tools { display: flex; flex: 1; }
.group h2 { display: flex; justify-content: center; align-items: center; gap: 3px; margin: 0; height: 13px; font-size: 7px; font-weight: 500; color: #888; }
.group h2 svg { width: 8px; height: 8px; }
.big { display: flex; flex-direction: column; align-items: center; padding-top: 3px; position: relative; font-weight: 500; line-height: 9px; color: #222; }
.big svg { width: 21px; height: 21px; margin-bottom: 4px; }
.big.arrow::after, .sm b, .more, .dd::before { content: ""; width: 0; height: 0; border: 2px solid transparent; border-top-color: #222; border-bottom: 0; }
.big.arrow::after { margin-top: 4px; }
.big.two { line-height: 7px; }
.big.two svg { margin-bottom: 2px; }
.small { display: grid; grid-auto-rows: 14px; align-content: start; padding-top: 10px; }
.sm { display: flex; align-items: center; gap: 3px; font-weight: 500; color: #222; }
.sm span + b { margin-left: auto; }
.g-draw { width: 205px; padding-left: 7px; }
.g-draw .big { width: 34px; }
.g-draw .big:nth-child(1) { width: 27px; }
.g-draw .big:nth-child(4) { width: 28px; }
.g-draw .small { grid-template-columns: 47px 20px; column-gap: 2px; }
.g-modify { width: 196px; padding-left: 9px; }
.g-modify .big { width: 42px; }
.g-modify .small { grid-template-columns: 38px 41px 10px 10px 10px; column-gap: 6px; }
.g-anno { width: 112px; padding-left: 7px; }
.g-anno .big { width: 26px; }
.g-anno .big:nth-child(2) { width: 38px; }
.g-anno .big:nth-child(3) { width: 34px; }
.g-layers { width: 161px; padding-left: 5px; }
.g-layers .big { width: 30px; }
.rfield { display: flex; align-items: center; border: 1px solid #ccc; border-radius: 2px; }
.rfield select { font-size: 8px; }
.rfield .cv { color: #888; margin-right: 4px; }
.lstack { padding-top: 9px; width: 117px; }
.lstack .rfield { height: 17px; gap: 3px; padding-left: 1px; }
.white { width: 10px; height: 9px; background: #fff; }
.lrow { display: flex; gap: 4px; padding: 1px 0 0 1px; }
.lrow .sm { gap: 2px; }
.lrow .sm:nth-child(5) { margin-right: 2px; }
.g-block { width: 48px; }
.g-block .tools { justify-content: center; }
.g-props { width: 112px; padding-left: 7px; }
.g-props .big { width: 31px; }
.pstack { width: 65px; padding-top: 9px; }
.pstack .rfield { height: 16px; gap: 2px; padding-left: 3px; }
.stroke { width: 17px; height: 1px; background: #333; }
.g-util { width: 69px; padding-left: 9px; }
.g-util .big { width: 32px; }
.g-util .small { padding-left: 1px; }
.g-util .sm { justify-content: center; width: 16px; }
.sm.sel { border: 1px solid #7eb6ee; background: #eaf3fc; }
.g-ctrl { width: 48px; padding-left: 6px; }
.g-ctrl .small { grid-template-columns: 16px 16px; }
.g-ctrl .sm { justify-content: center; }

/* Work area */
.work { flex: 1; min-height: 0; display: grid; grid-template-columns: 184px 1fr 236px; background: #e4e4e5; }
.dock { position: relative; display: flex; flex-direction: column; background: #f2f2f3; min-width: 0; }
.left { border-right: 2px solid #d8dadd; }
.handle { display: flex; align-items: center; justify-content: center; position: relative; height: 8px; background: #e2e2e4; }
.handle i { width: 10px; height: 2px; background: repeating-linear-gradient(90deg, #555 0 2px, transparent 2px 3px); }
.handle button { position: absolute; right: 1px; top: 1px; }
.handle svg { width: 5px; height: 5px; }
.dtabs { display: flex; height: 11px; padding-left: 5px; border-bottom: 1px solid #999; }
.dtab { position: relative; z-index: 0; display: flex; align-items: center; justify-content: center; gap: 5px; padding: 0 4px; line-height: 10px; }
.dtab::before { content: ""; position: absolute; z-index: -1; inset: 0; border: 1px solid #999; border-bottom: 0; border-radius: 3px 3px 0 0; transform: skewX(-18deg); background: #f6f6f6; }
.dtab.cur { font-weight: 700; color: #111; }
.dtab.cur::before { background: #d4d4d4; transform: skewX(-28deg); }
.dtab svg { width: 6px; height: 6px; }
.left .dtab.cur { width: 54px; }
.t-param { width: 52px; }
.t-calc { width: 53px; }
.more { margin: 4px 3px 0 auto; border-width: 3px; border-bottom: 0; }
.conf { display: flex; align-items: center; height: 14px; gap: 1px; }
.conf svg { width: 8px; height: 9px; }
.search { display: flex; align-items: center; gap: 4px; height: 13px; padding-left: 1px; border: 1px solid #aaa; border-bottom-color: #777; border-left: 0; background: #f8f8f8; }
.search svg { width: 8px; height: 8px; transform: scaleX(-1); }
.search input { flex: 1; outline: 0; }
.search input::placeholder { color: #777; opacity: 1; }
.tree { display: flex; align-items: center; height: 15px; gap: 2px; padding-left: 8px; }
.tree i { width: 8px; height: 1px; background: #bbb; }
.center { display: flex; flex-direction: column; min-width: 0; border-bottom: 1px solid #999; border-right: 1px solid #777; }
.files { display: flex; height: 13px; background: #e6e6e8; font-family: Roboto, sans-serif; }
.file { display: flex; align-items: center; gap: 10px; padding: 0 5px 0 8px; background: #f6f6f6; }
.file.cur { background: #dcdcdc; font-weight: 700; font-size: 8px; gap: 9px; padding-left: 6px; }
.file svg { width: 6px; height: 6px; }
.file.plus { padding: 0 5px; background: #fff; }
.file.plus svg { width: 7px; height: 7px; }
.canvas { position: relative; flex: 1; background: #1b1c1e; overflow: hidden; }
.look { position: absolute; top: 6px; right: 6px; width: 40px; height: 40px; }
.cross { position: absolute; top: 49px; right: 0; width: 30px; height: 58px; }
.ucs { position: absolute; left: 46px; bottom: 41px; width: 60px; height: 56px; font: 10px "Liberation Sans", sans-serif; }
.cmd { position: absolute; left: 180px; right: 180px; bottom: 4px; height: 11px; display: flex; align-items: center; justify-content: space-between; padding: 0 6px 0 2px; background: #303336; }
.cmd i { width: 1px; height: 8px; background: repeating-linear-gradient(#bbb 0 1px, transparent 1px 2px); }
.cmd button { border: 2px solid transparent; border-bottom: 3px solid #fff; border-top: 0; }
.layouts { display: flex; align-items: center; height: 11px; background: #f0f1f3; }
.nav { width: 11px; height: 11px; background: #fff; display: grid; place-items: center; border-right: 1px solid #ccc; }
.nav svg { width: 8px; height: 8px; }
.lt { height: 11px; padding: 0 4px; background: #fafafa; }
.lt.cur { background: #dde3e5; font-weight: 700; padding: 0 1px; }
.selrow { display: flex; align-items: center; height: 17px; padding: 0 0 1px 2px; }
.selrow .field { flex: 1; max-width: 208px; }
.selrow .ic { width: 12px; }
.selrow .ic:first-of-type { margin-left: auto; }
.props { width: 100%; border-collapse: collapse; table-layout: fixed; color: #333; }
.c1 { width: 10px; }
.c2 { width: 57px; }
.props td, .props th { height: 11px; padding: 0 0 0 2px; line-height: 10px; font-weight: 400; text-align: left; border-bottom: 1px solid #ddd; border-right: 1px solid #d4d4d4; overflow: hidden; }
.props td:first-child { border-bottom-color: transparent; padding: 0 0 0 2px; }
.props td:first-child i { display: block; width: 6px; height: 6px; border: 1px solid #999; font: 6px/4px "DejaVu Sans", sans-serif; text-align: center; }
.props .head td, .props .head th { height: 10px; line-height: 9px; }
.props .head th { font-weight: 700; color: #111; background: #cfcfcf; padding-left: 1px; }
.props .ro { color: #999; }
.props .swatch { display: inline-block; width: 8px; height: 8px; vertical-align: -1px; margin: 0 3px 0 1px; }
.rule { display: inline-block; width: 85px; height: 1px; margin: 0 3px 0 1px; background: #444; vertical-align: 2px; }
.callout { position: absolute; left: -3px; right: 28px; top: 2px; height: 24px; border: 3px solid #43e8c0; }
.cursor { position: absolute; left: 83px; top: 9px; width: 16px; height: 23px; }

/* Status bar */
.status { display: flex; height: 11px; color: #444; align-items: center; }
.ready { margin: 0 auto 0 2px; color: #555; }
.coords { padding-left: 18px; border-left: 1px solid #ddd; margin-right: 3px; }
.status button { height: 9px; line-height: 9px; padding: 0 1px; margin-right: 1px; border-left: 1px solid #ddd; }
.status .off { color: #aaa; }
.status .act { background: #c9c5c7; }
.status .green { color: #28603c; }
.status .dd { padding: 0 2px; margin-right: 10px; }
.dd::before { display: block; }
.size { width: 8px; height: 8px; }
```
